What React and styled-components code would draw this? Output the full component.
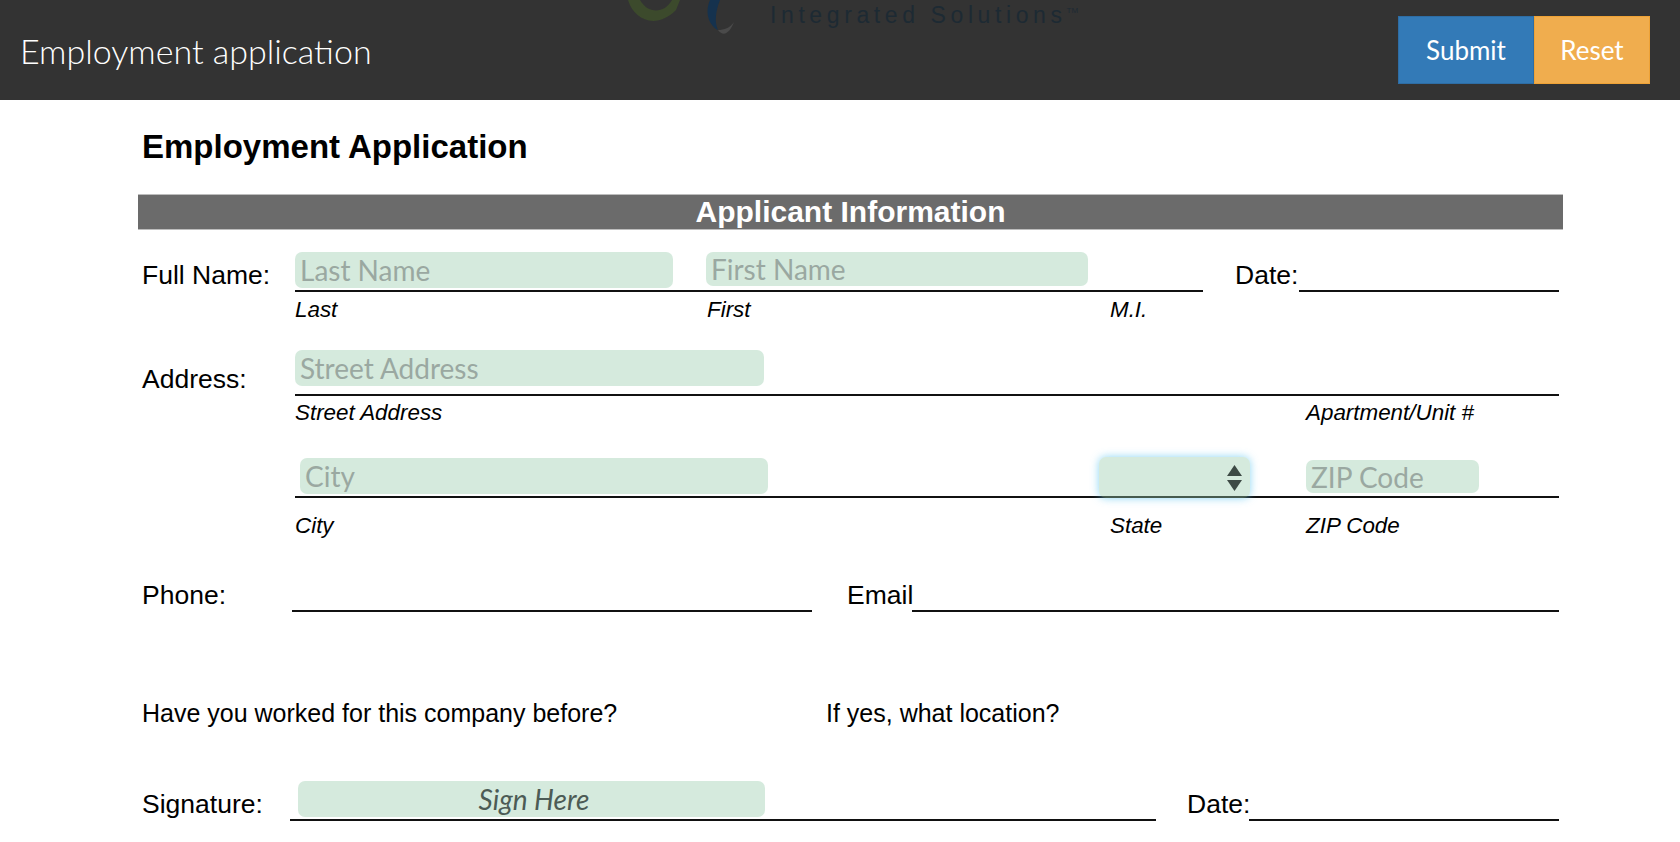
import React from "react";
import styled, { createGlobalStyle } from "styled-components";

const GlobalStyle = createGlobalStyle`
  html, body {
    margin: 0;
    padding: 0;
    background: #fff;
  }
  body {
    font-family: "Liberation Sans", Arial, sans-serif;
    color: #000;
    overflow: hidden;
  }
`;

const uiFont = `Lato, "Noto Sans", sans-serif`;

const Header = styled.header`
  position: relative;
  height: 100px;
  background: #333;
  display: flex;
  align-items: center;
  justify-content: space-between;
  padding: 0 30px 0 20px;
  overflow: hidden;
`;

const AppTitle = styled.div`
  font-family: ${uiFont};
  font-weight: 300;
  font-size: 34px;
  color: #fff;
`;

const Logo = styled.div`
  position: absolute;
  left: 620px;
  top: 0;
  width: 480px;
  height: 60px;
`;

const LogoText = styled.div`
  position: absolute;
  left: 150px;
  top: 1px;
  font-family: "Liberation Sans", sans-serif;
  font-size: 23px;
  line-height: 28px;
  letter-spacing: 4.6px;
  color: #1d2a33;
  white-space: nowrap;

  sup {
    font-size: 8px;
    letter-spacing: 0;
    vertical-align: 10px;
    line-height: 0;
  }
`;

const ButtonGroup = styled.div`
  display: flex;
`;

const Button = styled.button`
  height: 68px;
  width: ${(p) => p.$w}px;
  border: 1px solid ${(p) => p.$border};
  background: ${(p) => p.$bg};
  color: #fff;
  font-family: ${uiFont};
  font-size: 26px;
  padding: 0;
`;

const Sheet = styled.main`
  width: 1425px;
  margin-left: 138px;
`;

const DocTitle = styled.h1`
  margin: 0;
  height: 94px;
  padding-left: 4px;
  display: flex;
  align-items: center;
  font-size: 33px;
  font-weight: 700;
`;

const SectionBar = styled.div`
  height: 36px;
  background: #6b6b6b;
  border-top: 1px solid #bdbdbd;
  border-bottom: 1px solid #bdbdbd;
  box-sizing: border-box;
  display: flex;
  align-items: center;
  justify-content: center;
  color: #fff;
  font-size: 30px;
  font-weight: 700;
`;

const Row = styled.div`
  display: flex;
  align-items: flex-end;
  height: ${(p) => p.$h}px;
  padding: 0 4px;
`;

const Label = styled.div`
  flex: none;
  width: ${(p) => p.$w}px;
  margin-left: ${(p) => p.$ml || 0}px;
  margin-bottom: 2px;
  font-size: 26.5px;
  line-height: 30px;
  white-space: nowrap;
`;

const Line = styled.div`
  flex: ${(p) => (p.$w ? "none" : 1)};
  width: ${(p) => (p.$w ? `${p.$w}px` : "auto")};
  height: 60px;
  box-sizing: border-box;
  border-bottom: 2px solid #111;
  display: flex;
  align-items: flex-end;
`;

const Field = styled.input`
  flex: none;
  box-sizing: border-box;
  width: ${(p) => p.$w}px;
  height: ${(p) => p.$h}px;
  margin: 0 0 ${(p) => p.$gap}px ${(p) => p.$ml}px;
  padding: 0 5px;
  border: 0;
  border-radius: 7px;
  outline: none;
  background: rgba(150, 202, 170, 0.4);
  font-family: ${uiFont};
  font-size: 28px;
  color: #333;

  &::placeholder {
    color: #9aa8a1;
    opacity: 1;
  }
`;

const SignField = styled(Field)`
  text-align: center;
  font-style: italic;
  padding-right: 0;

  &::placeholder {
    color: #4c5b55;
  }
`;

const StateBox = styled.div`
  position: relative;
  flex: none;
  box-sizing: border-box;
  width: 151px;
  height: 41px;
  margin: 0 0 -2px ${(p) => p.$ml}px;
  border-radius: 7px;
  background: rgba(150, 202, 170, 0.4);
  box-shadow: 0 0 8px rgba(102, 200, 240, 0.75);
`;

const StateArrows = styled.svg`
  position: absolute;
  right: 8px;
  top: 8px;
  width: 15px;
  height: 26px;
`;

const Captions = styled.div`
  display: flex;
  height: 26px;
  margin-top: ${(p) => p.$mt}px;
  padding-left: 157px;
`;

const Caption = styled.div`
  flex: none;
  width: ${(p) => p.$w}px;
  font-size: 22.4px;
  line-height: 26px;
  font-style: italic;
  white-space: nowrap;
`;

const Question = styled.div`
  display: flex;
  margin-top: 86px;
  height: 30px;
  padding-left: 4px;
`;

const QuestionText = styled.div`
  flex: none;
  width: ${(p) => p.$w}px;
  font-size: 25px;
  line-height: 30px;
  white-space: nowrap;
`;

export default function App() {
  return (
    <>
      <GlobalStyle />
      <Header>
        <AppTitle>Employment application</AppTitle>
        <Logo>
          <svg width="130" height="60" viewBox="0 0 130 60">
            <path d="M8 0 C14 20 36 30 56 10 L60 0 L52 0 C44 14 28 14 20 0 Z" fill="#3c4a2c" />
            <path d="M90 0 C84 14 90 26 98 30 C94 22 96 10 100 0 Z" fill="#15324e" />
            <path d="M98 30 C104 38 110 32 114 22 C110 28 104 30 98 30 Z" fill="#4a4a4a" />
          </svg>
          <LogoText>
            Integrated Solutions<sup>TM</sup>
          </LogoText>
        </Logo>
        <ButtonGroup>
          <Button $w={136} $bg="#337ab7" $border="#2e6da4">Submit</Button>
          <Button $w={116} $bg="#f0ad4e" $border="#eea236">Reset</Button>
        </ButtonGroup>
      </Header>
      <Sheet>
        <DocTitle>Employment Application</DocTitle>
        <SectionBar>Applicant Information</SectionBar>

        <Row $h={62}>
          <Label $w={153}>Full Name:</Label>
          <Line $w={908}>
            <Field $w={378} $h={36} $gap={2} $ml={0} placeholder="Last Name" />
            <Field $w={382} $h={34} $gap={4} $ml={33} placeholder="First Name" />
          </Line>
          <Label $w={64} $ml={32}>Date:</Label>
          <Line />
        </Row>
        <Captions $mt={5}>
          <Caption $w={412}>Last</Caption>
          <Caption $w={403}>First</Caption>
          <Caption $w={100}>M.I.</Caption>
        </Captions>

        <Row $h={73}>
          <Label $w={153}>Address:</Label>
          <Line>
            <Field $w={469} $h={36} $gap={8} $ml={0} placeholder="Street Address" />
          </Line>
        </Row>
        <Captions $mt={4}>
          <Caption $w={1011}>Street Address</Caption>
          <Caption $w={200}>Apartment/Unit #</Caption>
        </Captions>

        <Row $h={72}>
          <Label $w={153} />
          <Line>
            <Field $w={468} $h={36} $gap={2} $ml={5} placeholder="City" />
            <StateBox $ml={331}>
              <StateArrows viewBox="0 0 15 26">
                <path d="M7.5 0 L15 11 L0 11 Z" fill="#3d4a45" />
                <path d="M0 15 L15 15 L7.5 26 Z" fill="#3d4a45" />
              </StateArrows>
            </StateBox>
            <Field $w={173} $h={33} $gap={3} $ml={56} placeholder="ZIP Code" />
          </Line>
        </Row>
        <Captions $mt={15}>
          <Caption $w={815}>City</Caption>
          <Caption $w={196}>State</Caption>
          <Caption $w={200}>ZIP Code</Caption>
        </Captions>

        <Row $h={73}>
          <Label $w={150}>Phone:</Label>
          <Line $w={520} />
          <Label $w={65} $ml={35}>Email</Label>
          <Line />
        </Row>

        <Question>
          <QuestionText $w={684}>Have you worked for this company before?</QuestionText>
          <QuestionText $w={300}>If yes, what location?</QuestionText>
        </Question>

        <Row $h={93}>
          <Label $w={148}>Signature:</Label>
          <Line $w={866}>
            <SignField $w={467} $h={36} $gap={2} $ml={8} placeholder="Sign Here" />
          </Line>
          <Label $w={62} $ml={31}>Date:</Label>
          <Line />
        </Row>
      </Sheet>
    </>
  );
}
